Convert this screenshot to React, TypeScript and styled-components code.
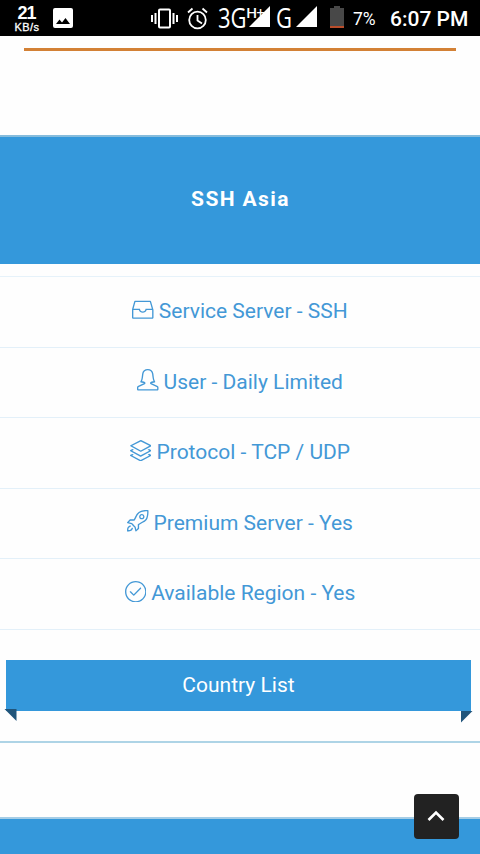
import React from 'react';
import styled, { createGlobalStyle } from 'styled-components';
import { SlDrawer, SlUserFemale, SlLayers, SlRocket, SlCheck } from 'react-icons/sl';

const blue = '#3498db';

const GlobalStyle = createGlobalStyle`
  * { box-sizing: border-box; }
  body { margin: 0; background: #fff; overflow: hidden; }
`;

const Screen = styled.div`
  position: relative;
  width: 480px;
  height: 854px;
  overflow: hidden;
  background: #fefefe;
  font-family: Roboto, sans-serif;
`;

const StatusBar = styled.header`
  display: flex;
  align-items: flex-start;
  height: 36px;
  background: #000;
  color: #fff;
`;

const Speed = styled.div`
  display: flex;
  flex-direction: column;
  align-items: center;
  width: 28px;
  margin: 4px 0 0 13px;
  font-family: 'Liberation Sans', sans-serif;
  white-space: nowrap;
`;

const SpeedValue = styled.span`
  font-size: 19px;
  line-height: 17px;
  font-weight: 700;
  letter-spacing: -1px;
  transform: scaleX(0.95);
`;

const SpeedUnit = styled.span`
  font-size: 11px;
  line-height: 12px;
  letter-spacing: 0.4px;
  -webkit-text-stroke: 0.3px #fff;
`;

const StatusIcon = styled.svg<{ $left: number; $top: number }>`
  display: block;
  flex: none;
  margin: ${(p) => p.$top}px 0 0 ${(p) => p.$left}px;
`;

const Network = styled.span<{ $left: number; $width: number }>`
  flex: none;
  width: ${(p) => p.$width}px;
  margin: 2px 0 0 ${(p) => p.$left}px;
  font: 400 27.5px/31px 'Open Sans', sans-serif;
  white-space: nowrap;
`;

const Squeeze = styled.span`
  display: inline-block;
  transform: scaleX(0.8);
  transform-origin: left;
`;

const Signal = styled.div`
  position: relative;
  flex: none;
  width: 21px;
`;

const SignalKind = styled.span`
  position: absolute;
  left: -3px;
  top: 4px;
  font: 600 15px/16px 'Open Sans', sans-serif;
  letter-spacing: -1px;
  white-space: nowrap;
`;

const Percent = styled.span`
  flex: none;
  width: 24px;
  margin: 8px 0 0 9px;
  font-size: 17.5px;
  line-height: 22px;
  white-space: nowrap;
`;

const Clock = styled.span`
  margin: 7px 0 0 13px;
  font-size: 21px;
  font-weight: 500;
  line-height: 24px;
  white-space: nowrap;
`;

const Divider = styled.div`
  height: 3px;
  margin: 12px 24px 84px;
  background: #d38135;
`;

const Card = styled.section`
  height: 608px;
  border-top: 2px solid #86bcdc;
  border-bottom: 2px solid #aed4e6;
`;

const CardHeader = styled.h2`
  display: flex;
  align-items: center;
  justify-content: center;
  height: 127px;
  margin: 0 0 12px;
  padding: 0 0 4px 1px;
  background: ${blue};
  color: #fff;
  font-size: 21px;
  font-weight: 700;
  letter-spacing: 1.4px;
`;

const Features = styled.ul`
  margin: 0;
  padding: 0;
  list-style: none;
  border-top: 1px solid #e6f2fa;
`;

const Feature = styled.li`
  display: flex;
  align-items: center;
  justify-content: center;
  gap: 5px;
  height: 70.5px;
  padding-bottom: 1px;
  border-bottom: 1px solid #e3f0f9;
  color: #4398d6;
  font-size: 21px;
  line-height: 24px;
  white-space: nowrap;

  svg {
    flex: none;
    width: 21.5px;
    height: 21.5px;
    margin-bottom: 4px;
  }
`;

const Ribbon = styled.a`
  position: relative;
  display: flex;
  align-items: center;
  justify-content: center;
  height: 51px;
  margin: 30px 9px 0 6px;
  background: ${blue};
  color: #fff;
  font-size: 21px;
`;

const Fold = styled.i<{ $right?: boolean }>`
  position: absolute;
  top: ${(p) => (p.$right ? 51 : 49)}px;
  ${(p) => (p.$right ? 'right: -2px;' : 'left: -2px;')}
  width: 12.500px;
  height: 12.500px;
  background: #20557b;
  clip-path: ${(p) => (p.$right ? 'polygon(0 0, 100% 0, 0 100%)' : 'polygon(0 0, 100% 0, 100% 100%)')};
`;

const NextCard = styled.section`
  height: 60px;
  margin-top: 74px;
  border-top: 2px solid #a5cde6;
  background: ${blue};
`;

const ToTop = styled.button`
  position: absolute;
  left: 414px;
  top: 793.5px;
  display: flex;
  align-items: center;
  justify-content: center;
  width: 45px;
  height: 45px;
  padding: 0 1px 0 0;
  border: 0;
  border-radius: 4px;
  background: #222;
`;

const features = [
  { Icon: SlDrawer, text: 'Service Server - SSH' },
  { Icon: SlUserFemale, text: 'User - Daily Limited' },
  { Icon: SlLayers, text: 'Protocol - TCP / UDP' },
  { Icon: SlRocket, text: 'Premium Server - Yes' },
  { Icon: SlCheck, text: 'Available Region - Yes' },
];

export default function App() {
  return (
    <>
      <GlobalStyle />
      <Screen>
        <StatusBar>
          <Speed>
            <SpeedValue>21</SpeedValue>
            <SpeedUnit>KB/s</SpeedUnit>
          </Speed>
          <StatusIcon $left={12} $top={8} width="20" height="20" viewBox="0 0 20 20">
            <path fill="#fff" fillRule="evenodd" d="M2 0h16a2 2 0 0 1 2 2v16a2 2 0 0 1-2 2H2a2 2 0 0 1-2-2V2a2 2 0 0 1 2-2zM3 16h14l-4.500-6-3.500 4.500-2.500-3z" />
          </StatusIcon>
          <StatusIcon $left={78} $top={8} width="27" height="21" viewBox="0 0 27 21">
            <path fill="none" stroke="#fff" strokeWidth="2" d="M1 7v7M4.500 5v11M22.500 5v11M26 7v7" />
            <rect x="8" y="1.500" width="11" height="18" rx="1" fill="none" stroke="#fff" strokeWidth="2" />
          </StatusIcon>
          <StatusIcon $left={9} $top={7} width="21" height="23" viewBox="0 0 21 23">
            <circle cx="10.500" cy="13" r="8.300" fill="none" stroke="#fff" strokeWidth="1.800" />
            <path fill="none" stroke="#fff" strokeWidth="1.800" d="M10.500 8v5.500l4.500 3M1 5.500l4.500-4M20 5.500l-4.500-4" />
          </StatusIcon>
          <Network $left={10} $width={31}><Squeeze>3G</Squeeze></Network>
          <Signal>
            <StatusIcon $left={0} $top={6} width="21" height="21" viewBox="0 0 21 21">
              <path fill="#fff" d="M21 0v21H0z" />
            </StatusIcon>
            <SignalKind>H+</SignalKind>
          </Signal>
          <Network $left={6} $width={20}><Squeeze>G</Squeeze></Network>
          <StatusIcon $left={0} $top={6} width="21" height="21" viewBox="0 0 21 21">
            <path fill="#fff" d="M21 0v21H0z" />
          </StatusIcon>
          <StatusIcon $left={13} $top={6} width="14" height="22" viewBox="0 0 14 22">
            <path fill="#484848" d="M4 0h6v2h4v18H0V2h4z" />
            <path fill="#b94d2b" d="M0 20h14v2H0z" />
          </StatusIcon>
          <Percent>7%</Percent>
          <Clock>6:07 PM</Clock>
        </StatusBar>
        <Divider />
        <Card>
          <CardHeader>SSH Asia</CardHeader>
          <Features>
            {features.map(({ Icon, text }) => (
              <Feature key={text}>
                <Icon />
                <span>{text}</span>
              </Feature>
            ))}
          </Features>
          <Ribbon>
            Country List
            <Fold />
            <Fold $right />
          </Ribbon>
        </Card>
        <NextCard />
        <ToTop aria-label="Back to top">
          <svg width="18" height="12" viewBox="0 0 18 12">
            <path fill="none" stroke="#fff" strokeWidth="2.600" d="M1.500 10L9 2.500l7.500 7.500" />
          </svg>
        </ToTop>
      </Screen>
    </>
  );
}
